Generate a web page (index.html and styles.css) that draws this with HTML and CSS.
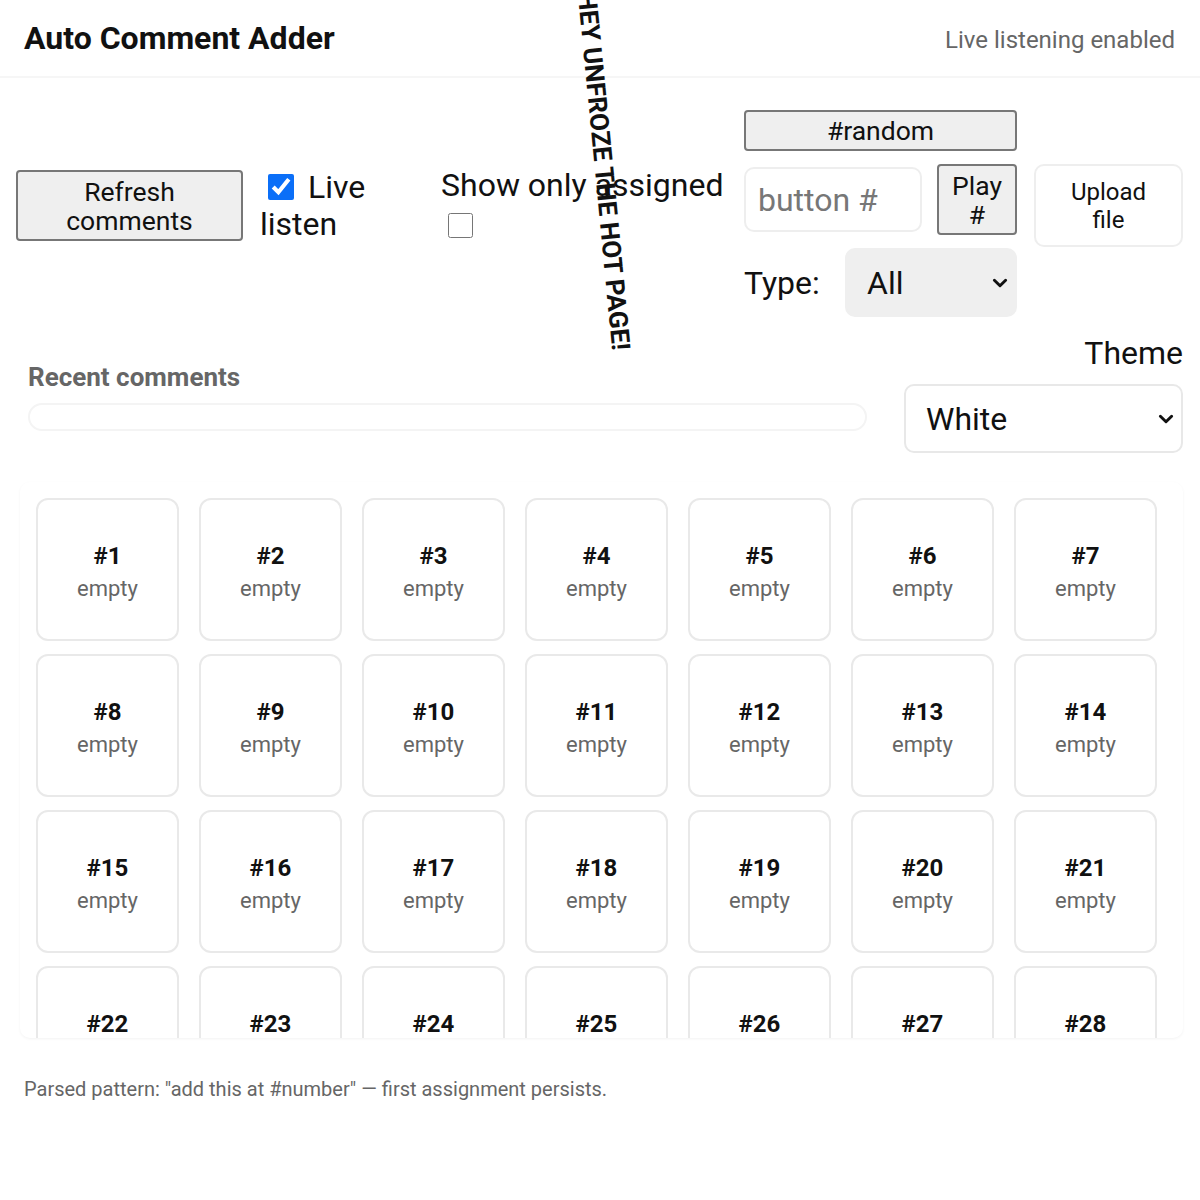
FILE: index.html
```html
<!DOCTYPE html>
<html lang="en">
<head>
  <meta charset="UTF-8">
  <meta name="viewport" content="width=device-width, initial-scale=1.0">
  <title>Auto Comment Adder</title>
  <link rel="stylesheet" href="styles.css">
</head>
<body>

  <header class="topbar">
    <h1>Auto Comment Adder</h1>
    <span class="status">Live listening enabled</span>
  </header>

  <span class="banner">HEY UNFROZE THE HOT PAGE!</span>

  <!-- Controls -->
  <section class="toolbar">
    <button class="btn btn-refresh">Refresh comments</button>
    <label class="live"><input type="checkbox" checked> Live listen</label>
    <label class="assigned">Show only assigned <input type="checkbox"></label>

    <div class="controls">
      <button class="btn btn-random">#random</button>
      <div class="play-row">
        <input class="num-input" type="text" placeholder="button #">
        <button class="btn btn-play">Play #</button>
      </div>
      <button class="btn-upload">Upload file</button>
      <div class="type-row">
        <span>Type:</span>
        <div class="select-wrap grey">
          <select><option>All</option><option>Text</option><option>Audio</option></select>
          <svg class="chevron" viewBox="0 0 16 16"><path d="M3 5.5l5 5 5-5" fill="none" stroke="#111" stroke-width="2.6" stroke-linecap="round" stroke-linejoin="round"/></svg>
        </div>
      </div>
    </div>
  </section>

  <section class="meta-row">
    <div class="recent">
      <h2>Recent comments</h2>
      <div class="recent-bar"></div>
    </div>
    <div class="theme">
      <div class="theme-label">Theme</div>
      <div class="select-wrap">
        <select><option>White</option><option>Dark</option></select>
        <svg class="chevron" viewBox="0 0 16 16"><path d="M3 5.5l5 5 5-5" fill="none" stroke="#111" stroke-width="2.6" stroke-linecap="round" stroke-linejoin="round"/></svg>
      </div>
    </div>
  </section>

  <!-- Comment slots -->
  <section class="slots-box">
    <div class="slots" id="slots"></div>
  </section>

  <p class="note">Parsed pattern: "add this at #number" — first assignment persists.</p>

  <script>
    const slots = document.getElementById('slots');
    for (let i = 1; i <= 42; i++) {
      const card = document.createElement('div');
      card.className = 'slot';
      card.innerHTML = '<div class="slot-num">#' + i + '</div><div class="slot-text">empty</div>';
      slots.appendChild(card);
    }
  </script>

</body>
</html>
```

FILE: styles.css
```css
body {
  font-family: Roboto, 'Liberation Sans', sans-serif;
  margin: 0;
  padding: 0;
  background-color: #fff;
  color: #111;
  position: relative;
}
.topbar {
  height: 78px;
  display: flex;
  align-items: center;
  justify-content: space-between;
  padding: 0 25px 0 24px;
  border-bottom: 2px solid #f6f6f6;
  box-sizing: border-box;
}
h1 {
  font-size: 32px;
  font-weight: 700;
  margin: 0;
}
.status {
  font-size: 24px;
  color: #666;
  margin-top: 4px;
}
.banner {
  position: absolute;
  left: 604px;
  top: 171px;
  transform: translate(-50%, -50%) rotate(84.5deg);
  font-size: 26px;
  font-weight: 700;
  white-space: nowrap;
  color: #111;
}
.toolbar {
  display: flex;
  align-items: center;
  margin-top: 32px;
  padding: 0 17px 0 16px;
}
.btn {
  font-family: inherit;
  font-size: 26.5px;
  color: #111;
  background-color: #efefef;
  border: 2px solid #777;
  border-radius: 4px;
  cursor: pointer;
}
.btn-refresh {
  width: 227px;
  height: 71px;
  padding: 0 24px;
  line-height: 29px;
  margin-bottom: 16px;
}
.live,
.assigned {
  font-size: 32px;
  line-height: 37px;
  margin-bottom: 16px;
}
.live {
  width: 124px;
  margin-left: 17px;
}
.live input {
  width: 26px;
  height: 26px;
  margin: 0 6px 0 8px;
  accent-color: #0b6ff8;
  vertical-align: -2px;
}
.assigned {
  width: 292px;
  margin-left: 57px;
  margin-top: -4px;
}
.assigned input {
  width: 25px;
  height: 25px;
  margin: 9px 0 0 7px;
  vertical-align: top;
}
.controls {
  margin-left: auto;
  display: grid;
  grid-template-columns: 273px 149px;
  column-gap: 17px;
}
.btn-random {
  grid-column: 1;
  height: 41px;
  margin-bottom: 13px;
  line-height: 30px;
}
.play-row {
  grid-column: 1;
  grid-row: 2;
  display: flex;
  align-items: center;
  justify-content: space-between;
  align-self: start;
}
.num-input {
  width: 178px;
  height: 65px;
  box-sizing: border-box;
  border: 2px solid #eee;
  border-radius: 10px;
  font-family: inherit;
  font-size: 32px;
  padding: 0 12px;
  color: #111;
}
.num-input::placeholder {
  color: #777;
}
.btn-play {
  width: 80px;
  height: 71px;
  padding: 0 8px;
  line-height: 29px;
}
.btn-upload {
  grid-column: 2;
  grid-row: 2;
  height: 83px;
  font-family: inherit;
  font-size: 24px;
  line-height: 28px;
  color: #111;
  background-color: #fff;
  border: 2px solid #eee;
  border-radius: 10px;
  padding: 0 30px;
  cursor: pointer;
}
.type-row {
  grid-column: 1;
  grid-row: 3;
  display: flex;
  align-items: center;
  justify-content: space-between;
  font-size: 32px;
  margin-top: 1px;
}
.select-wrap {
  position: relative;
}
.select-wrap select {
  appearance: none;
  -webkit-appearance: none;
  font-family: inherit;
  font-size: 32px;
  color: #111;
  background-color: #fff;
  border: 2px solid #e8e8e8;
  border-radius: 10px;
  height: 69px;
  padding: 0 20px;
  width: 279px;
  display: block;
}
.select-wrap.grey select {
  width: 172px;
  background-color: #efefef;
  border-color: #efefef;
}
.chevron {
  position: absolute;
  right: 8px;
  top: 26px;
  width: 18px;
  height: 18px;
  pointer-events: none;
}
.meta-row {
  display: flex;
  align-items: center;
  justify-content: space-between;
  margin-top: 18px;
  padding: 0 17px 0 28px;
}
.recent {
  width: 839px;
}
.recent h2 {
  font-size: 26px;
  font-weight: 700;
  color: #666;
  margin: 4px 0 11px;
}
.recent-bar {
  height: 28px;
  box-sizing: border-box;
  border: 2px solid #f4f4f4;
  border-radius: 14px;
}
.theme {
  text-align: right;
}
.theme-label {
  font-size: 32px;
  line-height: 37px;
  margin-bottom: 12px;
}
.theme select {
  text-align: left;
}
.slots-box {
  margin: 29px 17px 0 20px;
  padding: 16px 16px 0;
  height: 556px;
  overflow: hidden;
  border-radius: 10px;
  box-sizing: border-box;
  box-shadow: 0 1px 3px rgba(0, 0, 0, 0.05);
}
.slots {
  display: grid;
  grid-template-columns: repeat(7, 143px);
  column-gap: 20px;
  row-gap: 13px;
}
.slot {
  height: 143px;
  box-sizing: border-box;
  border: 2px solid #e9e9e9;
  border-radius: 12px;
  display: flex;
  flex-direction: column;
  align-items: center;
  justify-content: center;
  padding-top: 6px;
}
.slot-num {
  font-size: 24px;
  font-weight: 700;
  line-height: 30px;
}
.slot-text {
  font-size: 22px;
  color: #666;
  line-height: 30px;
  margin-top: 3px;
}
.note {
  font-size: 20px;
  color: #666;
  margin: 39px 24px 0;
  line-height: 24px;
}
```
